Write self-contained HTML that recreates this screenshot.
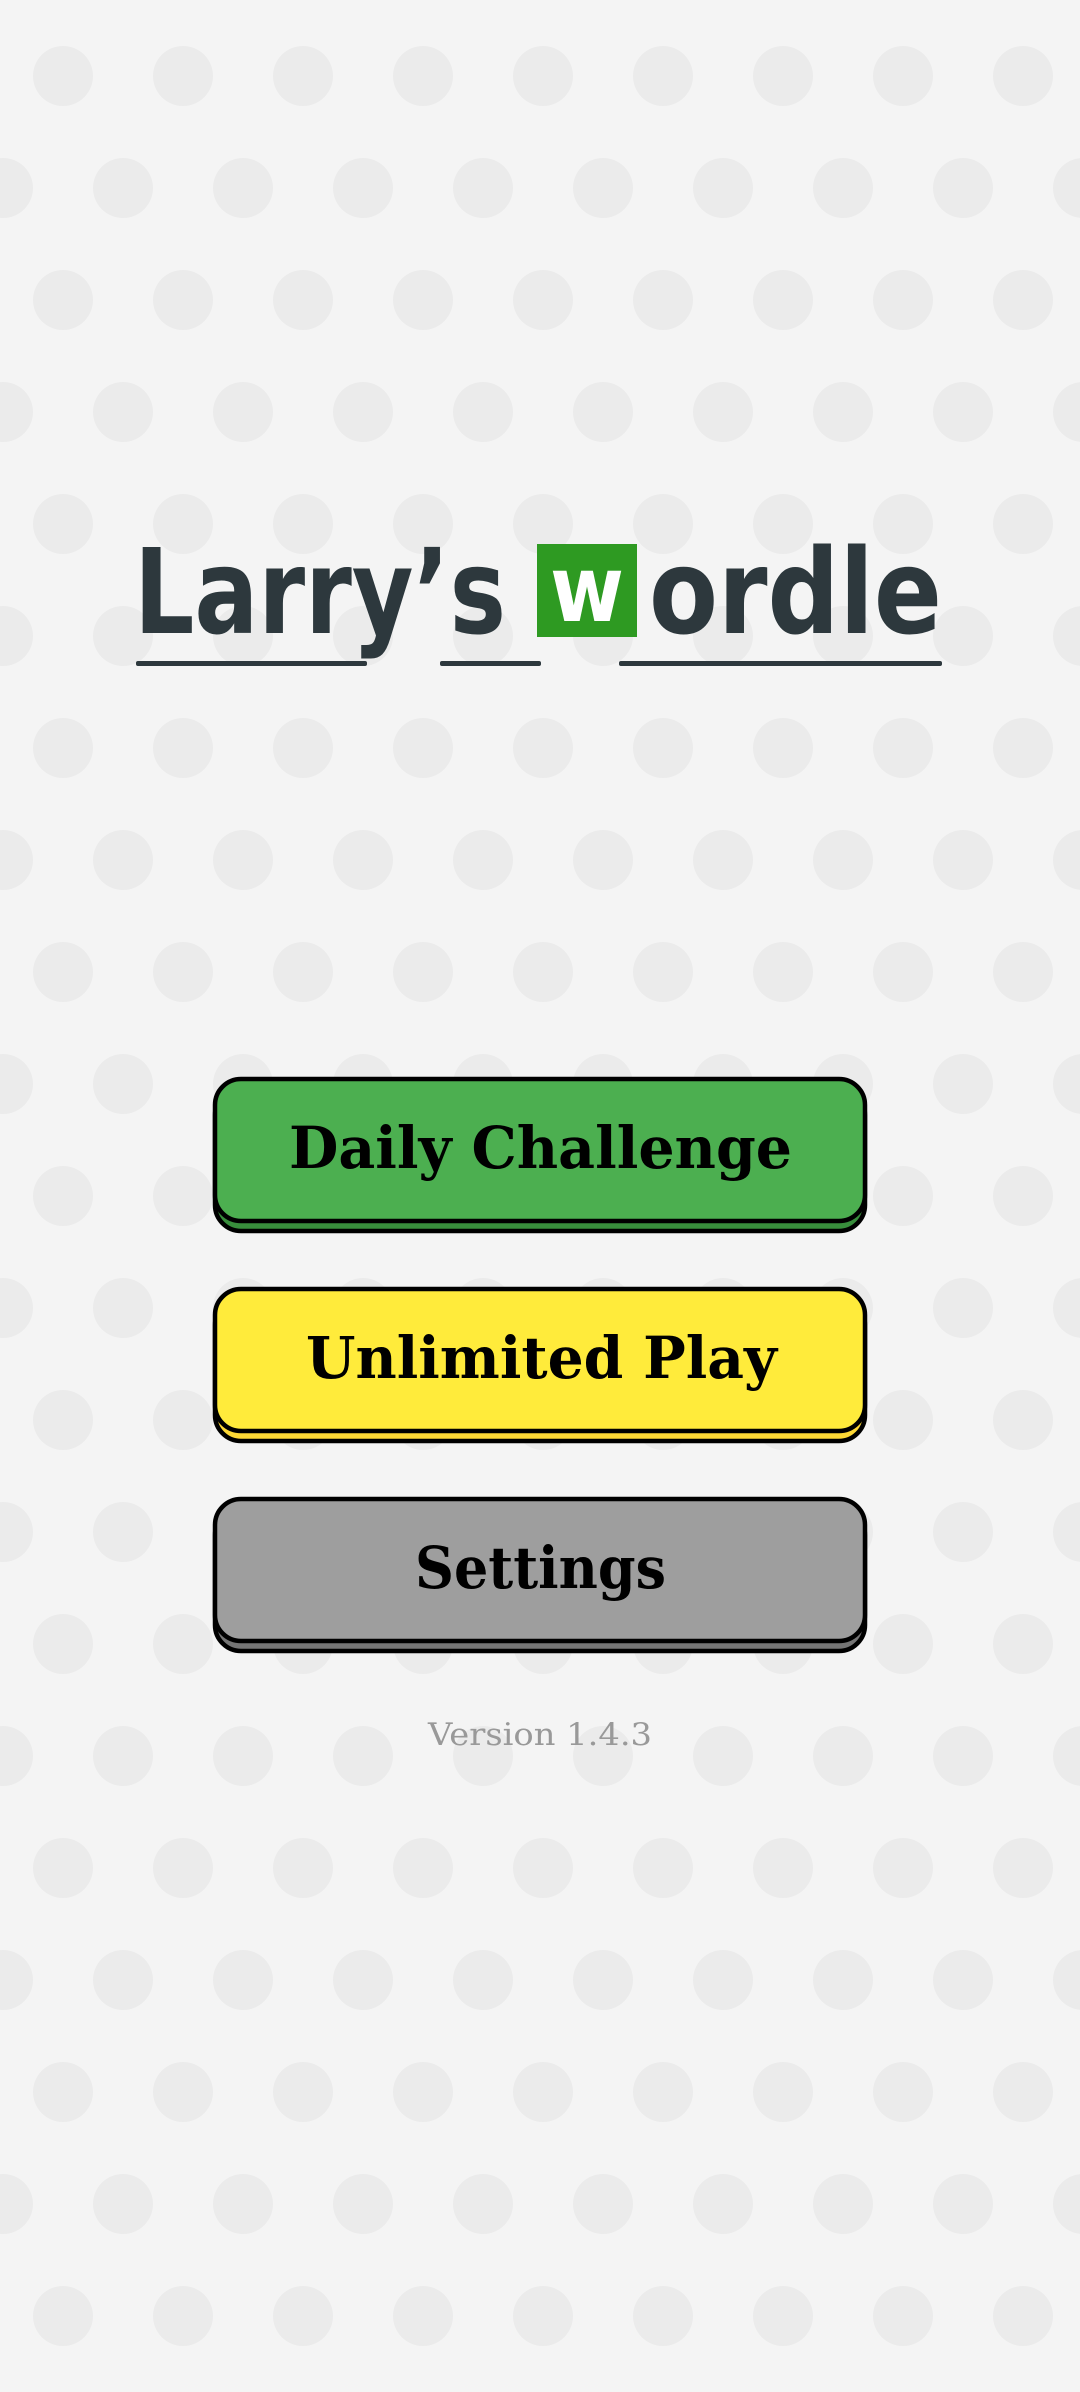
<!DOCTYPE html>
<html><head><meta charset="utf-8"><style>
html,body{margin:0;padding:0;background:#f4f4f4;}
svg{display:block;}
</style></head><body>
<svg width="1080" height="2392" viewBox="0 0 1080 2392" xmlns="http://www.w3.org/2000/svg">
<defs>
<pattern id="dots" x="0" y="0" width="120" height="224" patternUnits="userSpaceOnUse">
<circle cx="63" cy="76" r="30" fill="#ebebeb"/>
<circle cx="3" cy="188" r="30" fill="#ebebeb"/>
<circle cx="123" cy="188" r="30" fill="#ebebeb"/>
</pattern>
</defs>
<rect width="1080" height="2392" fill="#f4f4f4"/>
<rect width="1080" height="2392" fill="url(#dots)"/>

<!-- logo -->
<g font-family="'DejaVu Sans','Liberation Sans',sans-serif" font-weight="bold" fill="#2d383d">
<text x="134" y="633" font-size="118" textLength="372" lengthAdjust="spacingAndGlyphs">Larry’s</text>
<rect x="537" y="544" width="100" height="93" fill="#2e9a22"/>
<text x="587" y="621" font-size="92" fill="#ffffff" text-anchor="middle" textLength="74" lengthAdjust="spacingAndGlyphs">w</text>
<text x="649" y="633" font-size="118" textLength="293" lengthAdjust="spacingAndGlyphs">ordle</text>
</g>
<rect x="136" y="661" width="231" height="5" rx="2" fill="#2d383d"/>
<rect x="440" y="661" width="101" height="5" rx="2" fill="#2d383d"/>
<rect x="619" y="661" width="323" height="5" rx="2" fill="#2d383d"/>

<!-- buttons -->
<g stroke="#000" stroke-width="4.5">
<rect x="215" y="1089" width="650" height="142" rx="26" fill="#388e3c"/>
<rect x="215" y="1079" width="650" height="142" rx="26" fill="#4caf50"/>
<rect x="215" y="1299" width="650" height="142" rx="26" fill="#fdd835"/>
<rect x="215" y="1289" width="650" height="142" rx="26" fill="#ffeb3b"/>
<rect x="215" y="1509" width="650" height="142" rx="26" fill="#757575"/>
<rect x="215" y="1499" width="650" height="142" rx="26" fill="#9e9e9e"/>
</g>
<g font-family="'DejaVu Serif','Liberation Serif',serif" font-weight="bold" fill="#000" font-size="58">
<text x="289" y="1168" textLength="503" lengthAdjust="spacingAndGlyphs">Daily Challenge</text>
<text x="306" y="1378" textLength="471" lengthAdjust="spacingAndGlyphs">Unlimited Play</text>
<text x="415" y="1588" textLength="251" lengthAdjust="spacingAndGlyphs">Settings</text>
</g>
<text x="428" y="1745" font-family="'DejaVu Serif','Liberation Serif',serif" font-size="31" fill="#999999" textLength="224" lengthAdjust="spacingAndGlyphs">Version 1.4.3</text>
</svg>
</body></html>
